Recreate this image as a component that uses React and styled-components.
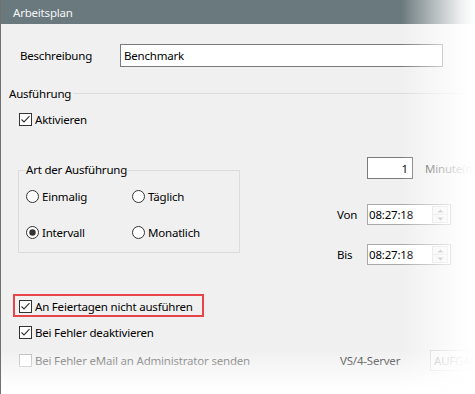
import React from "react";
import styled, { createGlobalStyle } from "styled-components";

const FONT = `"Noto Sans", "Segoe UI", sans-serif`;

const GlobalStyle = createGlobalStyle`
  html, body { margin: 0; padding: 0; background: #fff; }
  * { box-sizing: border-box; }
`;

const Window = styled.div`
  position: relative;
  width: 475px;
  height: 394px;
  overflow: hidden;
  background: #f0f0f0;
  border-left: 1px solid #707070;
  font-family: ${FONT};
  font-size: 11.5px;
  letter-spacing: -0.2px;
  color: #000;
`;

const TitleBar = styled.div`
  height: 24px;
  background: #6a797e;
  color: #f4f6f7;
  display: flex;
  align-items: center;
  padding-left: 12px;
`;

const DescRow = styled.div`
  display: flex;
  align-items: center;
  margin: 20px 0 0 19px;
`;

const FieldLabel = styled.span`
  width: ${(p) => p.$w || 100}px;
  flex: none;
`;

const TextInput = styled.div`
  width: ${(p) => p.$w}px;
  height: ${(p) => p.$h || 23}px;
  border: 1px solid #7a7a7a;
  background: #fff;
  display: flex;
  align-items: center;
  justify-content: ${(p) => (p.$right ? "flex-end" : "flex-start")};
  padding: 0 4px 0 3px;
`;

const Group = styled.fieldset`
  margin: 17px 0 0 6px;
  padding: 0;
  border: none;
  border-top: 1px solid #dcdcdc;
  min-width: 0;
`;

const GroupLegend = styled.legend`
  padding: 2px 2px 0;
  margin-left: 0;
  line-height: 16px;
`;

const GroupBody = styled.div`
  padding-left: 12px;
  display: flex;
  flex-direction: column;
  align-items: flex-start;
`;

const CheckRow = styled.label`
  display: flex;
  align-items: center;
  gap: 3px;
  height: 16px;
  margin-top: ${(p) => p.$mt || 0}px;
  color: ${(p) => (p.$disabled ? "#6d6d6d" : "#000")};
  width: ${(p) => (p.$w ? `${p.$w}px` : "auto")};
  flex: none;
`;

const Highlight = styled.div`
  margin: 29px 0 0 -6px;
  border: 2px solid #e8454b;
  padding: 2px 9px 1px 4px;
`;

const Middle = styled.div`
  display: flex;
  align-items: flex-start;
`;

const ArtBox = styled.fieldset`
  margin: 35px 0 0 -1px;
  width: 222px;
  border: 1px solid #dcdcdc;
  padding: 0 0 12px 7px;
  min-width: 0;
`;

const ArtLegend = styled.legend`
  padding: 0;
  line-height: 16px;
`;

const RadioGrid = styled.div`
  display: grid;
  grid-template-columns: 106px 1fr;
  row-gap: 20px;
  margin-top: 10px;
`;

const RadioItem = styled.label`
  display: flex;
  align-items: center;
  gap: 3px;
  height: 16px;
`;

const RightCol = styled.div`
  margin: 30px 0 0 97px;
  display: flex;
  flex-direction: column;
`;

const RightRow = styled.div`
  display: flex;
  align-items: center;
  margin-top: ${(p) => p.$mt || 0}px;
`;

const Unit = styled.span`
  margin-left: 12px;
  color: #444;
  white-space: nowrap;
`;

const TimeBox = styled.div`
  width: 84px;
  height: 21px;
  border: 1px solid #a9a9a9;
  background: #fff;
  display: flex;
  align-items: center;
`;

const TimeText = styled.span`
  flex: 1;
  padding-left: 1px;
`;

const Spin = styled.div`
  width: 16px;
  height: 17px;
  margin-right: 2px;
  display: flex;
  flex-direction: column;
  border: 1px solid #dcdcdc;
`;

const SpinBtn = styled.div`
  flex: 1;
  background: #f4f4f4;
  display: flex;
  align-items: center;
  justify-content: center;
  & + & { border-top: 1px solid #dcdcdc; }
`;

const BottomRow = styled.div`
  display: flex;
  align-items: center;
  margin-top: 10px;
`;

const ServerLabel = styled.span`
  width: 90px;
  flex: none;
  color: #333;
`;

const Combo = styled.div`
  width: 110px;
  height: 21px;
  flex: none;
  border: 1px solid #c4c4c4;
  background: #f4f4f4;
  color: #8c8c8c;
  display: flex;
  align-items: center;
  padding-left: 3px;
  white-space: nowrap;
`;

const RightFade = styled.div`
  position: absolute;
  top: 0;
  right: 0;
  bottom: 0;
  width: 74px;
  pointer-events: none;
  background: linear-gradient(
    to right,
    rgba(255, 255, 255, 0) 0%,
    rgba(255, 255, 255, 0.45) 40%,
    rgba(255, 255, 255, 0.9) 82%,
    #fff 100%
  );
`;

const BottomFade = styled.div`
  position: absolute;
  left: 0;
  right: 0;
  bottom: 0;
  height: 44px;
  pointer-events: none;
  background: linear-gradient(
    to bottom,
    rgba(255, 255, 255, 0) 0%,
    rgba(255, 255, 255, 0.5) 45%,
    rgba(255, 255, 255, 0.9) 80%,
    #fff 100%
  );
`;

const CheckBox = ({ checked, disabled }) => (
  <svg width="13" height="13" viewBox="0 0 13 13" style={{ flex: "none" }}>
    <rect
      x="0.5"
      y="0.5"
      width="12"
      height="12"
      fill="#fff"
      stroke={disabled ? "#bcbcbc" : "#333"}
    />
    {checked && (
      <path d="M2.5 6.5 L5 9 L10.5 3.2" fill="none" stroke="#333" strokeWidth="1.1" />
    )}
  </svg>
);

const Radio = ({ checked }) => (
  <svg width="13" height="13" viewBox="0 0 13 13" style={{ flex: "none" }}>
    <circle cx="6.5" cy="6.5" r="6" fill="#fff" stroke="#333" />
    {checked && <circle cx="6.5" cy="6.5" r="3.2" fill="#333" />}
  </svg>
);

const Tri = ({ up }) => (
  <svg width="7" height="4" viewBox="0 0 7 4">
    <path d={up ? "M0.5 3.5 L3.5 0.5 L6.5 3.5 Z" : "M0.5 0.5 L3.5 3.5 L6.5 0.5 Z"} fill="#9a9a9a" />
  </svg>
);

const TimeField = ({ value }) => (
  <TimeBox>
    <TimeText>{value}</TimeText>
    <Spin>
      <SpinBtn><Tri up /></SpinBtn>
      <SpinBtn><Tri /></SpinBtn>
    </Spin>
  </TimeBox>
);

export default function App() {
  return (
    <>
      <GlobalStyle />
      <Window>
        <TitleBar>Arbeitsplan</TitleBar>
        <DescRow>
          <FieldLabel>Beschreibung</FieldLabel>
          <TextInput $w={323}>Benchmark</TextInput>
        </DescRow>
        <Group>
          <GroupLegend>Ausführung</GroupLegend>
          <GroupBody>
            <CheckRow $mt={9}>
              <CheckBox checked />
              Aktivieren
            </CheckRow>
            <Middle>
              <ArtBox>
                <ArtLegend>Art der Ausführung</ArtLegend>
                <RadioGrid>
                  <RadioItem><Radio />Einmalig</RadioItem>
                  <RadioItem><Radio />Täglich</RadioItem>
                  <RadioItem><Radio checked />Intervall</RadioItem>
                  <RadioItem><Radio />Monatlich</RadioItem>
                </RadioGrid>
              </ArtBox>
              <RightCol>
                <RightRow>
                  <FieldLabel $w={30} />
                  <TextInput $w={46} $h={22} $right>1</TextInput>
                  <Unit>Minute(n)</Unit>
                </RightRow>
                <RightRow $mt={25}>
                  <FieldLabel $w={30}>Von</FieldLabel>
                  <TimeField value="08:27:18" />
                </RightRow>
                <RightRow $mt={19}>
                  <FieldLabel $w={30}>Bis</FieldLabel>
                  <TimeField value="08:27:18" />
                </RightRow>
              </RightCol>
            </Middle>
            <Highlight>
              <CheckRow>
                <CheckBox checked />
                An Feiertagen nicht ausführen
              </CheckRow>
            </Highlight>
            <CheckRow $mt={7}>
              <CheckBox checked />
              Bei Fehler deaktivieren
            </CheckRow>
            <BottomRow>
              <CheckRow $w={321} $disabled>
                <CheckBox disabled />
                Bei Fehler eMail an Administrator senden
              </CheckRow>
              <ServerLabel>VS/4-Server</ServerLabel>
              <Combo>AUFGABEN</Combo>
            </BottomRow>
          </GroupBody>
        </Group>
        <RightFade />
        <BottomFade />
      </Window>
    </>
  );
}
